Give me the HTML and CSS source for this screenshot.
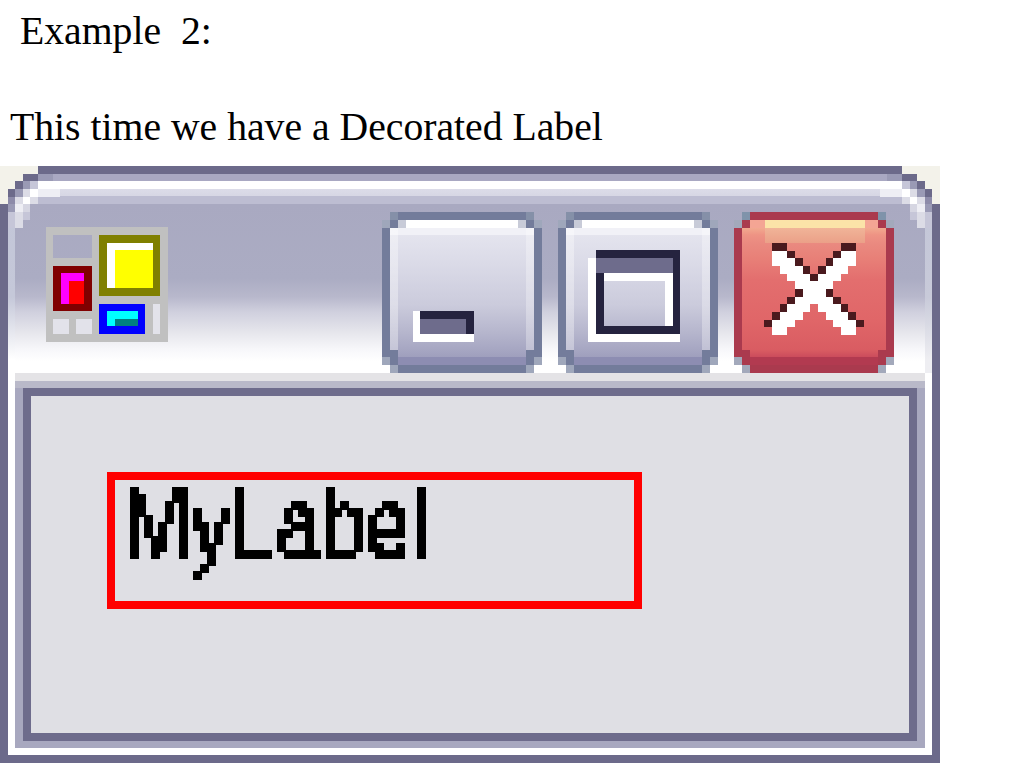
FILE: index.html
```html
<!DOCTYPE html>
<html lang="en">
<head>
<meta charset="utf-8">
<title>Decorated Label</title>
<link rel="stylesheet" href="styles.css">
</head>
<body>
<svg class="defs" width="0" height="0" aria-hidden="true">
  <defs>
    <filter id="pixelate" x="0" y="0" width="100%" height="100%" color-interpolation-filters="sRGB">
      <feFlood x="4" y="4" width="1" height="1" flood-color="#000"/>
      <feComposite width="8" height="8"/>
      <feTile result="grid"/>
      <feComposite in="SourceGraphic" in2="grid" operator="in"/>
      <feMorphology operator="dilate" radius="4"/>
      <feComponentTransfer>
        <feFuncA type="discrete" tableValues="0 1 1 1"/>
      </feComponentTransfer>
    </filter>
    <g id="stair" shape-rendering="crispEdges">
      <path fill="#f3f2ea" d="M0 0H38V8H23V15H15V23H8V38H0Z"/>
      <path fill="#6c6a8a" d="M23 8H38V15H23ZM15 15H23V23H15ZM8 23H15V31H8ZM0 38H8V46H0Z"/>
      <path fill="#8d8ba9" d="M8 31H15V38H8Z"/>
      <path fill="#9a9ab5" d="M38 8H53V15H38ZM23 15H30V23H23ZM15 23H23V31H15ZM8 38H15V46H8Z"/>
      <path fill="#c6c6d8" d="M30 15H38V23H30ZM8 46H15V54H8ZM8 54H15V62H8ZM23 46H30V54H23Z"/>
      <path fill="#dcdce6" d="M23 23H30V31H23ZM15 31H23V38H15ZM30 31H38V38H30ZM15 46H23V54H15ZM15 54H23V62H15Z"/>
      <path fill="#ffffff" d="M30 23H38V31H30ZM23 31H30V38H23Z"/>
      <path fill="#eeeef4" d="M38 23H60V31H38ZM15 38H23V46H15Z"/>
      <path fill="#d6d6e2" d="M23 38H30V46H23Z"/>
    </g>
  </defs>
</svg>

<p class="example">Example&nbsp; 2:</p>
<p class="lead">This time we have a Decorated Label</p>

<div class="window">
  <svg class="corner corner-left" width="60" height="62" viewBox="0 0 60 62" aria-hidden="true"><use href="#stair"/></svg>
  <svg class="corner corner-right" width="60" height="62" viewBox="0 0 60 62" aria-hidden="true"><use href="#stair"/></svg>

  <div class="stripe stripe-lavender"></div>
  <div class="stripe stripe-white"></div>
  <div class="stripe stripe-shade"></div>

  <div class="titlebar">
    <svg class="app-icon" width="122" height="115" viewBox="0 0 122 115" aria-hidden="true" shape-rendering="crispEdges">
      <path fill="#c0c0c0" fill-rule="evenodd" d="M0 0H122V115H0ZM7 8V31H46V8ZM7 92V107H23V92ZM30 92V107H46V92ZM107 77V107H114V77Z"/>
      <rect x="7" y="92" width="16" height="15" fill="#e2e2ea"/>
      <rect x="30" y="92" width="16" height="15" fill="#e2e2ea"/>
      <rect x="107" y="77" width="7" height="30" fill="#e2e2ea"/>
      <rect x="53" y="8" width="61" height="61" fill="#808000"/>
      <rect x="61" y="16" width="46" height="45" fill="#ffffff"/>
      <rect x="69" y="23" width="38" height="38" fill="#ffff00"/>
      <rect x="7" y="39" width="39" height="45" fill="#800000"/>
      <rect x="15" y="46" width="23" height="31" fill="#ff00ff"/>
      <rect x="23" y="54" width="15" height="23" fill="#ff0000"/>
      <rect x="53" y="77" width="46" height="30" fill="#0000ff"/>
      <rect x="61" y="84" width="31" height="15" fill="#00ffff"/>
      <rect x="69" y="92" width="23" height="7" fill="#008080"/>
    </svg>

    <div class="buttons">
      <button class="btn" type="button" aria-label="Minimize">
        <svg class="glyph glyph-min" width="61" height="31" viewBox="0 0 61 31" aria-hidden="true" shape-rendering="crispEdges">
          <path fill="#ffffff" d="M0 0H7V23H61V31H0Z"/>
          <path fill="#25233f" d="M7 0H61V23H53V8H7Z"/>
          <rect x="7" y="8" width="46" height="15" fill="#6e6c8c"/>
        </svg>
      </button>
      <button class="btn" type="button" aria-label="Maximize">
        <svg class="glyph glyph-max" width="92" height="92" viewBox="0 0 92 92" aria-hidden="true" shape-rendering="crispEdges">
          <path fill="#ffffff" d="M0 8H8V84H92V92H0Z"/>
          <path fill="#25233f" d="M8 0H92V84H8ZM16 23V76H85V23Z" fill-rule="evenodd"/>
          <rect x="8" y="8" width="77" height="15" fill="#6e6c8c"/>
          <path fill="#ffffff" d="M16 23H85V76H77V31H16Z"/>
        </svg>
      </button>
      <button class="btn btn-close" type="button" aria-label="Close">
        <svg class="glyph glyph-close" width="100" height="92" viewBox="0 0 13 12" aria-hidden="true" shape-rendering="crispEdges">
          <path fill="#ffffff" d="M1 1H3V2H4V3H5V4H6V5H7V4H8V3H9V2H10V1H12V3H11V4H10V5H9V6H8V7H9V8H10V9H11V10H12V12H10V11H9V10H8V9H7V8H6V9H5V10H4V11H3V12H1V10H2V9H3V8H4V7H5V6H4V5H3V4H2V3H1Z"/>
          <path fill="#4a1a1e" d="M1 0H3V1H4V2H5V3H6V4H7V3H8V2H9V1H10V0H12V1H10V2H9V3H8V4H7V5H6V4H5V3H4V2H3V1H1ZM4 6H5V7H4ZM8 6H9V7H8ZM3 7H4V8H3ZM9 7H10V8H9ZM2 8H3V9H2ZM10 8H11V9H10ZM1 9H2V10H1ZM11 9H12V10H11ZM0 10H1V11H0ZM12 10H13V11H12Z"/>
        </svg>
      </button>
    </div>
  </div>

  <div class="body">
    <div class="divider"></div>
    <div class="panel-shade">
      <div class="panel">
        <div class="label"><div class="label-text"><span class="label-glyphs">MyLabel</span></div></div>
      </div>
    </div>
  </div>
</div>
</body>
</html>
```

FILE: styles.css
```css
html, body {
  margin: 0;
  padding: 0;
  background: #ffffff;
  overflow: hidden;
}

body {
  height: 768px;
  font-family: "Liberation Serif", "Times New Roman", serif;
  font-size: 39.7px;
  line-height: 44px;
  color: #000000;
}

.defs {
  position: absolute;
}

.example {
  margin: 0;
  padding: 9px 0 0 20px;
  height: 44px;
}

.lead {
  margin: 0;
  padding: 52px 0 0 10px;
  height: 43px;
  white-space: nowrap;
}

.window {
  position: relative;
  box-sizing: border-box;
  width: 940px;
  height: 597px;
  margin-top: 18px;
  border: 8px solid #6c6a8a;
  display: flex;
  flex-direction: column;
  background: #ffffff;
}

.corner {
  position: absolute;
  top: -8px;
}

.corner-left {
  left: -8px;
}

.corner-right {
  right: -8px;
  transform: scaleX(-1);
}

.stripe {
  flex: none;
}

.stripe-lavender {
  height: 7px;
  background: #a9a8c2;
}

.stripe-white {
  height: 8px;
  background: #ffffff;
}

.stripe-shade {
  height: 15px;
  background: linear-gradient(#dcdce8 0, #d6d6e4 50%, #bdbdd2 50%, #bdbdd2 100%);
}

.titlebar {
  flex: none;
  box-sizing: border-box;
  height: 169px;
  padding: 8px 38px 0 38px;
  display: flex;
  justify-content: space-between;
  align-items: flex-start;
  background:
    linear-gradient(#c3c6d8 0, #c5c8d9 55%, #ffffff 92%) left top / 7px 100% no-repeat,
    linear-gradient(#c3c6d8 0, #c8cad9 55%, #eeeef2 92%) right top / 7px 100% no-repeat,
    linear-gradient(#a9a9c1 0, #abacc3 44%, #b8b8cc 55%, #d0d0de 64%, #e6e6ec 76%, #f7f7fa 86%, #ffffff 93%);
}

.app-icon {
  display: block;
  margin-top: 15px;
}

.buttons {
  display: flex;
  gap: 16px;
}

.btn {
  --edge: #9fa7bb;
  --tip: #8590a8;
  --inner: #737c9b;
  --soft: #c8cbd8;
  position: relative;
  box-sizing: border-box;
  width: 160px;
  height: 161px;
  padding: 0;
  border: 8px solid #737c9b;
  background:
    linear-gradient(90deg, rgba(255,255,255,.35) 0, rgba(255,255,255,.35) 8px, transparent 8px, transparent 136px, rgba(255,255,255,.3) 136px) padding-box,
    linear-gradient(#ffffff 0, #ffffff 8px, #f1f1f7 8px, #f1f1f7 15px, #e4e4ee 15px, #dadae7 45px, #cbcbdc 85px, #b6b6cd 112px, #a6a6c2 130px, #9f9fbd 137px, #8d8db2 137px, #8d8db2 145px) padding-box;
  clip-path: polygon(8px 0, calc(100% - 8px) 0, calc(100% - 8px) 8px, 100% 8px, 100% calc(100% - 8px), calc(100% - 8px) calc(100% - 8px), calc(100% - 8px) 100%, 8px 100%, 8px calc(100% - 8px), 0 calc(100% - 8px), 0 8px, 8px 8px);
}

/* soft pixels on the stepped corners */
.btn::before {
  content: "";
  position: absolute;
  inset: -8px;
  pointer-events: none;
  background:
    linear-gradient(var(--tip), var(--tip)) 8px 0 / 8px 8px no-repeat,
    linear-gradient(var(--tip), var(--tip)) 144px 0 / 8px 8px no-repeat,
    linear-gradient(var(--edge), var(--edge)) 0 8px / 8px 8px no-repeat,
    linear-gradient(var(--edge), var(--edge)) 152px 8px / 8px 8px no-repeat,
    linear-gradient(var(--inner), var(--inner)) 8px 8px / 8px 8px no-repeat,
    linear-gradient(var(--inner), var(--inner)) 144px 8px / 8px 8px no-repeat,
    linear-gradient(var(--soft), var(--soft)) 16px 8px / 8px 8px no-repeat,
    linear-gradient(var(--soft), var(--soft)) 136px 8px / 8px 8px no-repeat,
    linear-gradient(var(--edge), var(--edge)) 0 145px / 8px 8px no-repeat,
    linear-gradient(var(--edge), var(--edge)) 152px 145px / 8px 8px no-repeat,
    linear-gradient(var(--inner), var(--inner)) 8px 138px / 8px 15px no-repeat,
    linear-gradient(var(--inner), var(--inner)) 144px 138px / 8px 15px no-repeat,
    linear-gradient(var(--edge), var(--edge)) 8px 153px / 8px 8px no-repeat,
    linear-gradient(var(--edge), var(--edge)) 144px 153px / 8px 8px no-repeat;
}

.btn-close {
  --edge: #a3a9bb;
  --tip: #7f93aa;
  --inner: #aa3a4e;
  --soft: #f4a594;
  border-color: #aa3a4e;
  background:
    linear-gradient(90deg, #f4a594 0, #f4a594 23px, #fbe3a8 23px, #fbe3a8 123px, #f4a594 123px) top / 100% 8px no-repeat padding-box,
    linear-gradient(#f0b498, #eba088) 23px 8px / 100px 15px no-repeat padding-box,
    linear-gradient(#f2a98f 8px, #ee9384 15px, #ea8a80 23px, #e88078 38px, #e36e6e 60px, #e06668 100px, #d95c62 130px, #cb4c5c 137px, #b23a50 137px, #b23a50 145px) padding-box;
}

.glyph {
  position: absolute;
  display: block;
}

.glyph-min {
  left: 23px;
  top: 91px;
}

.glyph-max {
  left: 22px;
  top: 30px;
}

.glyph-close {
  left: 22px;
  top: 23px;
}

.body {
  flex: 1;
  display: flex;
  flex-direction: column;
  padding: 0 7px 7px;
  background: #ffffff;
  min-height: 0;
}

.divider {
  flex: none;
  height: 8px;
  background: #e4e3e6;
}

.panel-shade {
  flex: 1;
  display: flex;
  padding: 7px 8px;
  background: #a8a8bf;
  background-image: linear-gradient(#b9b9c9 7px, transparent 7px);
  min-height: 0;
}

.panel {
  flex: 1;
  box-sizing: border-box;
  border: 8px solid #6e6c8c;
  background: #dfdfe4;
  padding: 76px 0 0 76px;
}

.label {
  box-sizing: border-box;
  width: 535px;
  height: 137px;
  border: 8px solid #ff0000;
  padding: 0 0 0 8px;
}

.label-text {
  width: 340px;
  height: 110px;
  font-family: "Liberation Sans", sans-serif;
  font-size: 100px;
  line-height: 90px;
  color: #000000;
  transform: scale(.958);
  transform-origin: left top;
  filter: url(#pixelate);
}

.label-glyphs {
  display: inline-block;
  transform: scaleX(.845);
  transform-origin: left top;
}
```
